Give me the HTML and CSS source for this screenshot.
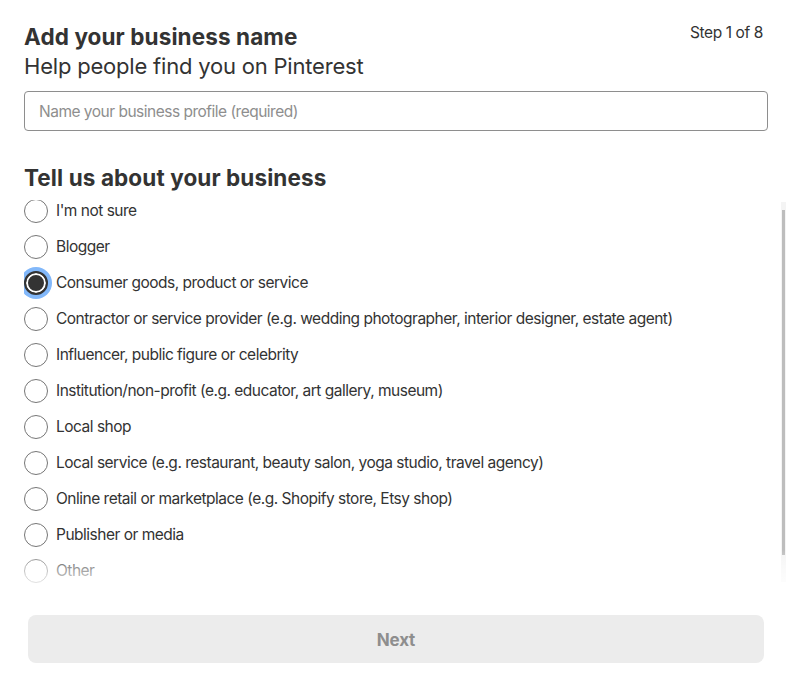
FILE: index.html
```html
<!DOCTYPE html>
<html>
<head>
<meta charset="utf-8">
<link rel="stylesheet" href="styles.css">
</head>
<body>
<div class="page">
  <div class="header">
    <div class="titles">
      <h1 class="title">Add your business name</h1>
      <div class="subtitle">Help people find you on Pinterest</div>
    </div>
    <div class="step">Step 1 of 8</div>
  </div>
  <div class="field">
    <input class="input" type="text" placeholder="Name your business profile (required)">
  </div>
  <h2 class="section">Tell us about your business</h2>
  <div class="listbox">
    <div class="list">
      <label class="row"><span class="radio"></span><span class="label">I'm not sure</span></label>
      <label class="row"><span class="radio"></span><span class="label">Blogger</span></label>
      <label class="row"><span class="radio checked"></span><span class="label">Consumer goods, product or service</span></label>
      <label class="row"><span class="radio"></span><span class="label">Contractor or service provider (e.g. wedding photographer, interior designer, estate agent)</span></label>
      <label class="row"><span class="radio"></span><span class="label">Influencer, public figure or celebrity</span></label>
      <label class="row"><span class="radio"></span><span class="label">Institution/non-profit (e.g. educator, art gallery, museum)</span></label>
      <label class="row"><span class="radio"></span><span class="label">Local shop</span></label>
      <label class="row"><span class="radio"></span><span class="label">Local service (e.g. restaurant, beauty salon, yoga studio, travel agency)</span></label>
      <label class="row"><span class="radio"></span><span class="label">Online retail or marketplace (e.g. Shopify store, Etsy shop)</span></label>
      <label class="row"><span class="radio"></span><span class="label">Publisher or media</span></label>
      <label class="row"><span class="radio"></span><span class="label">Other</span></label>
    </div>
    <div class="scrollbar"><div class="thumb"></div></div>
    <div class="fade"></div>
  </div>
  <div class="footer">
    <button class="next">Next</button>
  </div>
</div>
</body>
</html>
```

FILE: styles.css
```css
html, body {
  margin: 0;
  padding: 0;
  background: #ffffff;
}
body {
  font-family: Inter, "Noto Sans", "Liberation Sans", sans-serif;
  color: #333333;
  width: 786px;
  height: 681px;
  overflow: hidden;
}
.page {
  padding: 22px 0 0 24px;
  display: flex;
  flex-direction: column;
}
.header {
  display: flex;
  justify-content: space-between;
  align-items: flex-start;
  padding-right: 23px;
}
.title {
  margin: 0;
  font-size: 22.5px;
  font-weight: 700;
  line-height: 30px;
  letter-spacing: 0.1px;
}
.subtitle {
  font-size: 22px;
  font-weight: 400;
  line-height: 28px;
  letter-spacing: -0.2px;
}
.step {
  font-size: 15.5px;
  line-height: 20px;
  padding-top: 1px;
  letter-spacing: -0.4px;
}
.field {
  margin-top: 11px;
  padding-right: 18px;
}
.input {
  box-sizing: border-box;
  width: 100%;
  height: 40px;
  border: 1px solid #8e8e8e;
  border-radius: 4px;
  padding: 0 14px;
  font-family: inherit;
  font-size: 15.5px;
  color: #333;
  outline: none;
  letter-spacing: -0.5px;
}
.input::placeholder {
  color: #8e8e8e;
}
.section {
  margin: 32px 0 0 0;
  font-size: 22.5px;
  font-weight: 700;
  line-height: 30px;
  letter-spacing: 0.1px;
}
.listbox {
  position: relative;
  margin-top: 7px;
  height: 386px;
  overflow: hidden;
}
.list {
  margin-top: -7px;
  display: flex;
  flex-direction: column;
}
.row {
  display: flex;
  align-items: center;
  height: 36px;
  gap: 8px;
}
.radio {
  box-sizing: border-box;
  width: 24px;
  height: 24px;
  border-radius: 50%;
  border: 1px solid #767676;
  flex: none;
  background: #fff;
}
.radio.checked {
  border: 2px solid #333;
  background: #333;
  box-shadow: inset 0 0 0 2px #fff, 0 0 0 4px #82b8fa;
}
.label {
  font-size: 15.5px;
  line-height: 20px;
  letter-spacing: -0.5px;
  color: #333;
}
.scrollbar {
  position: absolute;
  right: 0;
  top: 2px;
  width: 5px;
  height: 380px;
  background: #f4f4f4;
}
.thumb {
  margin: 8px 0 0 1px;
  width: 3px;
  height: 345px;
  background: #bdbdbd;
}
.fade {
  position: absolute;
  left: 0;
  right: 0;
  bottom: 0;
  height: 36px;
  background: linear-gradient(to bottom, rgba(255,255,255,0), rgba(255,255,255,0.5) 50%, rgba(255,255,255,0.85) 100%);
}
.footer {
  margin-top: 29px;
  padding: 0 22px 0 4px;
}
.next {
  width: 100%;
  height: 48px;
  border: none;
  border-radius: 8px;
  background: #ececec;
  color: #8e8e8e;
  font-family: inherit;
  font-size: 17px;
  font-weight: 700;
  letter-spacing: -0.2px;
  padding-top: 2px;
}
```
